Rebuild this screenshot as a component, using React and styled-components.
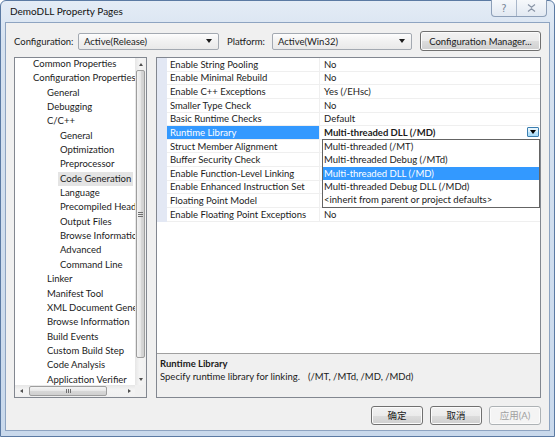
import React from "react";
import styled, { createGlobalStyle } from "styled-components";

const Global = createGlobalStyle`
  html, body { margin: 0; padding: 0; background: #fff; }
  body {
    width: 555px; height: 437px; overflow: hidden;
    font-family: Lato, "Noto Sans CJK SC", sans-serif;
    font-size: 9.5px; color: #1b1b1b;
  }
  * { box-sizing: border-box; }
`;

const Window = styled.div`
  width: 555px;
  height: 437px;
  display: flex;
  flex-direction: column;
  border: 1px solid #5b7aa3;
  border-radius: 6px 6px 0 0;
  background: linear-gradient(180deg, #e4ecf6 0px, #d6e2f0 40px, #c9d9ec 100%);
  padding: 0 4px 5px 4px;
`;

const TitleBar = styled.div`
  height: 21px;
  display: flex;
  align-items: center;
  padding-left: 5px;
`;

const Title = styled.span`
  font-size: 10px;
  color: #111;
  line-height: 21px;
`;

const CaptionGroup = styled.div`
  margin-left: auto;
  margin-right: 3px;
  align-self: flex-start;
  margin-top: -1px;
  height: 17px;
  display: flex;
  border: 1px solid #8d9fb8;
  border-top: none;
  border-radius: 0 0 4px 4px;
  background: linear-gradient(180deg, #f6f8fb, #e2e9f2);
  overflow: hidden;
`;

const CaptionBtn = styled.div`
  width: ${(p) => p.$w}px;
  display: flex;
  align-items: center;
  justify-content: center;
  color: #7b8798;
  font-size: 10px;
  font-family: "DejaVu Sans", sans-serif;
  & + & { border-left: 1px solid #a9b7ca; }
`;

const Client = styled.div`
  flex: 1;
  display: flex;
  flex-direction: column;
  border: 1px solid #8ea4c1;
  background: #f0f0f0;
  padding: 8px 8px 5px 8px;
`;

const Toolbar = styled.div`
  height: 20px;
  display: flex;
  align-items: center;
  margin-bottom: 6px;
`;

const Label = styled.span`
  width: ${(p) => p.$w}px;
  margin-left: ${(p) => p.$ml || 0}px;
  white-space: nowrap;
`;

const Select = styled.div`
  width: ${(p) => p.$w}px;
  height: 17px;
  display: flex;
  align-items: center;
  padding: 0 6px 0 5px;
  border: 1px solid #a3a9b1;
  border-radius: 2px;
  background: linear-gradient(180deg, #fdfdfd, #f1f1f1 50%, #e9e9e9);
`;

const SelectText = styled.span`
  flex: 1;
`;

const Caret = styled.span`
  width: 0;
  height: 0;
  border-left: 3px solid transparent;
  border-right: 3px solid transparent;
  border-top: 4px solid ${(p) => p.$c || "#1b1b1b"};
`;

const Button = styled.div`
  width: ${(p) => p.$w}px;
  height: ${(p) => p.$h || 20}px;
  margin-left: ${(p) => p.$ml || 0}px;
  display: flex;
  align-items: center;
  justify-content: center;
  border: 1px solid ${(p) => (p.$disabled ? "#adb2b5" : "#707070")};
  border-radius: 3px;
  color: ${(p) => (p.$disabled ? "#a0a0a0" : "#1b1b1b")};
  background: ${(p) =>
    p.$disabled
      ? "#f4f4f4"
      : "linear-gradient(180deg, #f2f2f2 0%, #ebebeb 50%, #dddddd 51%, #cfcfcf 100%)"};
  box-shadow: inset 0 0 0 1px #fbfbfb;
  white-space: nowrap;
`;

const Main = styled.div`
  height: 341px;
  display: flex;
  gap: 9px;
  margin-bottom: 7px;
`;

const TreePanel = styled.div`
  width: 133px;
  border: 1px solid #828790;
  background: #fff;
  display: grid;
  grid-template-columns: 120px 11px;
  grid-template-rows: 327px 12px;
`;

const TreeViewport = styled.div`
  overflow: hidden;
`;

const TreeList = styled.div`
  margin-top: -1px;
`;

const TreeItem = styled.div`
  height: 14.35px;
  line-height: 14.35px;
  white-space: nowrap;
  padding-left: ${(p) => [18, 32, 45][p.$level]}px;
`;

const TreeText = styled.span`
  display: inline-block;
  padding: 0 2px;
  margin-left: -2px;
  background: ${(p) => (p.$sel ? "#e4e4e4" : "transparent")};
`;

const VScroll = styled.div`
  display: flex;
  flex-direction: column;
  background: linear-gradient(90deg, #e6e6e6, #f4f4f4 40%, #f0f0f0);
`;

const HScroll = styled.div`
  display: flex;
  align-items: stretch;
  background: linear-gradient(180deg, #e6e6e6, #f4f4f4 40%, #f0f0f0);
`;

const Corner = styled.div`
  background: #f0f0f0;
`;

const ArrowBox = styled.div`
  width: ${(p) => (p.$h ? 12 : 11)}px;
  height: 12px;
  flex: none;
  display: flex;
  align-items: center;
  justify-content: center;
`;

const Tri = styled.span`
  width: 0;
  height: 0;
  ${(p) =>
    p.$dir === "up"
      ? "border-left: 2.5px solid transparent; border-right: 2.5px solid transparent; border-bottom: 3px solid #505050;"
      : p.$dir === "down"
      ? "border-left: 2.5px solid transparent; border-right: 2.5px solid transparent; border-top: 3px solid #505050;"
      : p.$dir === "left"
      ? "border-top: 2.5px solid transparent; border-bottom: 2.5px solid transparent; border-right: 3px solid #505050;"
      : "border-top: 2.5px solid transparent; border-bottom: 2.5px solid transparent; border-left: 3px solid #505050;"}
`;

const VThumb = styled.div`
  height: 288px;
  margin: 0 1px;
  border: 1px solid #9e9e9e;
  border-radius: 2px;
  background: linear-gradient(90deg, #f4f4f4, #e7e7e7 50%, #d8d8d8 51%, #d0d0d0);
  display: flex;
  align-items: center;
  justify-content: center;
`;

const VGrip = styled.div`
  width: 5px;
  height: 5px;
  background: repeating-linear-gradient(180deg, #6f6f6f 0 1px, transparent 1px 2px);
`;

const HThumb = styled.div`
  width: 78px;
  margin: 1px 0 1px 2px;
  border: 1px solid #9e9e9e;
  border-radius: 2px;
  background: linear-gradient(180deg, #f4f4f4, #e7e7e7 50%, #d8d8d8 51%, #d0d0d0);
  display: flex;
  align-items: center;
  justify-content: center;
`;

const HGrip = styled.div`
  width: 5px;
  height: 4px;
  background: repeating-linear-gradient(90deg, #6f6f6f 0 1px, transparent 1px 2px);
`;

const Spacer = styled.div`
  flex: 1;
`;

const RightPanel = styled.div`
  flex: 1;
  border: 1px solid #828790;
  display: flex;
  flex-direction: column;
`;

const GridArea = styled.div`
  flex: 1;
  background: #fff;
`;

const Row = styled.div`
  height: 13.64px;
  display: grid;
  grid-template-columns: 10px 153px 1fr;
`;

const MarginCell = styled.div`
  background: #e3e8f4;
`;

const NameCell = styled.div`
  display: flex;
  align-items: center;
  padding-left: 3px;
  white-space: nowrap;
  overflow: hidden;
  border-bottom: 1px solid #efefef;
  border-right: 1px solid #efefef;
  background: ${(p) => (p.$sel ? "#3399ff" : "#fff")};
  color: ${(p) => (p.$sel ? "#fff" : "#1b1b1b")};
`;

const ValueCell = styled.div`
  position: relative;
  display: flex;
  align-items: center;
  padding-left: 4px;
  padding-right: 1px;
  white-space: nowrap;
  border-bottom: 1px solid #efefef;
  font-weight: ${(p) => (p.$bold ? 700 : 400)};
`;

const ValueText = styled.span`
  flex: 1;
`;

const DropBtn = styled.div`
  width: 12px;
  height: 10px;
  display: flex;
  align-items: center;
  justify-content: center;
  border: 1px solid #3c7fb1;
  border-radius: 1px;
  background: linear-gradient(180deg, #eaf6fd, #d9f0fc 50%, #bee6fd 51%, #a7d9f5);
`;

const DropList = styled.div`
  position: absolute;
  top: 100%;
  left: 2px;
  right: 0;
  z-index: 2;
  background: #fff;
  border: 1px solid #646464;
  font-weight: 400;
`;

const DropItem = styled.div`
  height: 13.4px;
  line-height: 13.4px;
  padding-left: 1px;
  background: ${(p) => (p.$sel ? "#3399ff" : "#fff")};
  color: ${(p) => (p.$sel ? "#fff" : "#1b1b1b")};
`;

const Description = styled.div`
  height: 44px;
  border-top: 1px solid #a0a0a0;
  background: #f0f0f0;
  padding: 3px 3px 0 3px;
  line-height: 13px;
`;

const DescTitle = styled.div`
  font-weight: 700;
`;

const DescText = styled.div`
  white-space: nowrap;
`;

const DescCodes = styled.span`
  margin-left: 8px;
`;

const Footer = styled.div`
  height: 20px;
  display: flex;
  justify-content: flex-end;
  align-items: center;
  gap: 7px;
`;

const treeItems = [
  ["Common Properties", 0],
  ["Configuration Properties", 0],
  ["General", 1],
  ["Debugging", 1],
  ["C/C++", 1],
  ["General", 2],
  ["Optimization", 2],
  ["Preprocessor", 2],
  ["Code Generation", 2, true],
  ["Language", 2],
  ["Precompiled Headers", 2],
  ["Output Files", 2],
  ["Browse Information", 2],
  ["Advanced", 2],
  ["Command Line", 2],
  ["Linker", 1],
  ["Manifest Tool", 1],
  ["XML Document Generator", 1],
  ["Browse Information", 1],
  ["Build Events", 1],
  ["Custom Build Step", 1],
  ["Code Analysis", 1],
  ["Application Verifier", 1],
];

const props = [
  ["Enable String Pooling", "No"],
  ["Enable Minimal Rebuild", "No"],
  ["Enable C++ Exceptions", "Yes (/EHsc)"],
  ["Smaller Type Check", "No"],
  ["Basic Runtime Checks", "Default"],
  ["Runtime Library", "Multi-threaded DLL (/MD)", true],
  ["Struct Member Alignment", "Default"],
  ["Buffer Security Check", "Yes (/GS)"],
  ["Enable Function-Level Linking", "Yes (/Gy)"],
  ["Enable Enhanced Instruction Set", "Not Set"],
  ["Floating Point Model", "Precise (/fp:precise)"],
  ["Enable Floating Point Exceptions", "No"],
];

const options = [
  "Multi-threaded (/MT)",
  "Multi-threaded Debug (/MTd)",
  "Multi-threaded DLL (/MD)",
  "Multi-threaded Debug DLL (/MDd)",
  "<inherit from parent or project defaults>",
];

export default function App() {
  return (
    <>
      <Global />
      <Window>
        <TitleBar>
          <Title>DemoDLL Property Pages</Title>
          <CaptionGroup>
            <CaptionBtn $w={24}>?</CaptionBtn>
            <CaptionBtn $w={30}>
              <svg width="9" height="8" viewBox="0 0 9 8">
                <path
                  d="M1 0.5 L4.5 3.2 L8 0.5 M1 7.5 L4.5 4.8 L8 7.5"
                  fill="none"
                  stroke="#8894a6"
                  strokeWidth="1.2"
                />
              </svg>
            </CaptionBtn>
          </CaptionGroup>
        </TitleBar>
        <Client>
          <Toolbar>
            <Label $w={64}>Configuration:</Label>
            <Select $w={141}>
              <SelectText>Active(Release)</SelectText>
              <Caret />
            </Select>
            <Label $w={45} $ml={8}>Platform:</Label>
            <Select $w={140}>
              <SelectText>Active(Win32)</SelectText>
              <Caret />
            </Select>
            <Button $w={121} $ml={8}>Configuration Manager...</Button>
          </Toolbar>
          <Main>
            <TreePanel>
              <TreeViewport>
                <TreeList>
                  {treeItems.map(([label, level, sel], i) => (
                    <TreeItem key={i} $level={level}>
                      <TreeText $sel={sel}>{label}</TreeText>
                    </TreeItem>
                  ))}
                </TreeList>
              </TreeViewport>
              <VScroll>
                <ArrowBox>
                  <Tri $dir="up" />
                </ArrowBox>
                <VThumb>
                  <VGrip />
                </VThumb>
                <Spacer />
                <ArrowBox>
                  <Tri $dir="down" />
                </ArrowBox>
              </VScroll>
              <HScroll>
                <ArrowBox $h>
                  <Tri $dir="left" />
                </ArrowBox>
                <HThumb>
                  <HGrip />
                </HThumb>
                <Spacer />
                <ArrowBox $h>
                  <Tri $dir="right" />
                </ArrowBox>
              </HScroll>
              <Corner />
            </TreePanel>
            <RightPanel>
              <GridArea>
                {props.map(([name, value, sel], i) => (
                  <Row key={i}>
                    <MarginCell />
                    <NameCell $sel={sel}>{name}</NameCell>
                    <ValueCell $bold={sel}>
                      <ValueText>{value}</ValueText>
                      {sel && (
                        <>
                          <DropBtn>
                            <Caret $c="#000" />
                          </DropBtn>
                          <DropList>
                            {options.map((o, j) => (
                              <DropItem key={j} $sel={j === 2}>
                                {o}
                              </DropItem>
                            ))}
                          </DropList>
                        </>
                      )}
                    </ValueCell>
                  </Row>
                ))}
              </GridArea>
              <Description>
                <DescTitle>Runtime Library</DescTitle>
                <DescText>
                  Specify runtime library for linking.
                  <DescCodes>(/MT, /MTd, /MD, /MDd)</DescCodes>
                </DescText>
              </Description>
            </RightPanel>
          </Main>
          <Footer>
            <Button $w={52} $h={19}>确定</Button>
            <Button $w={52} $h={19}>取消</Button>
            <Button $w={52} $h={19} $disabled>应用(A)</Button>
          </Footer>
        </Client>
      </Window>
    </>
  );
}
